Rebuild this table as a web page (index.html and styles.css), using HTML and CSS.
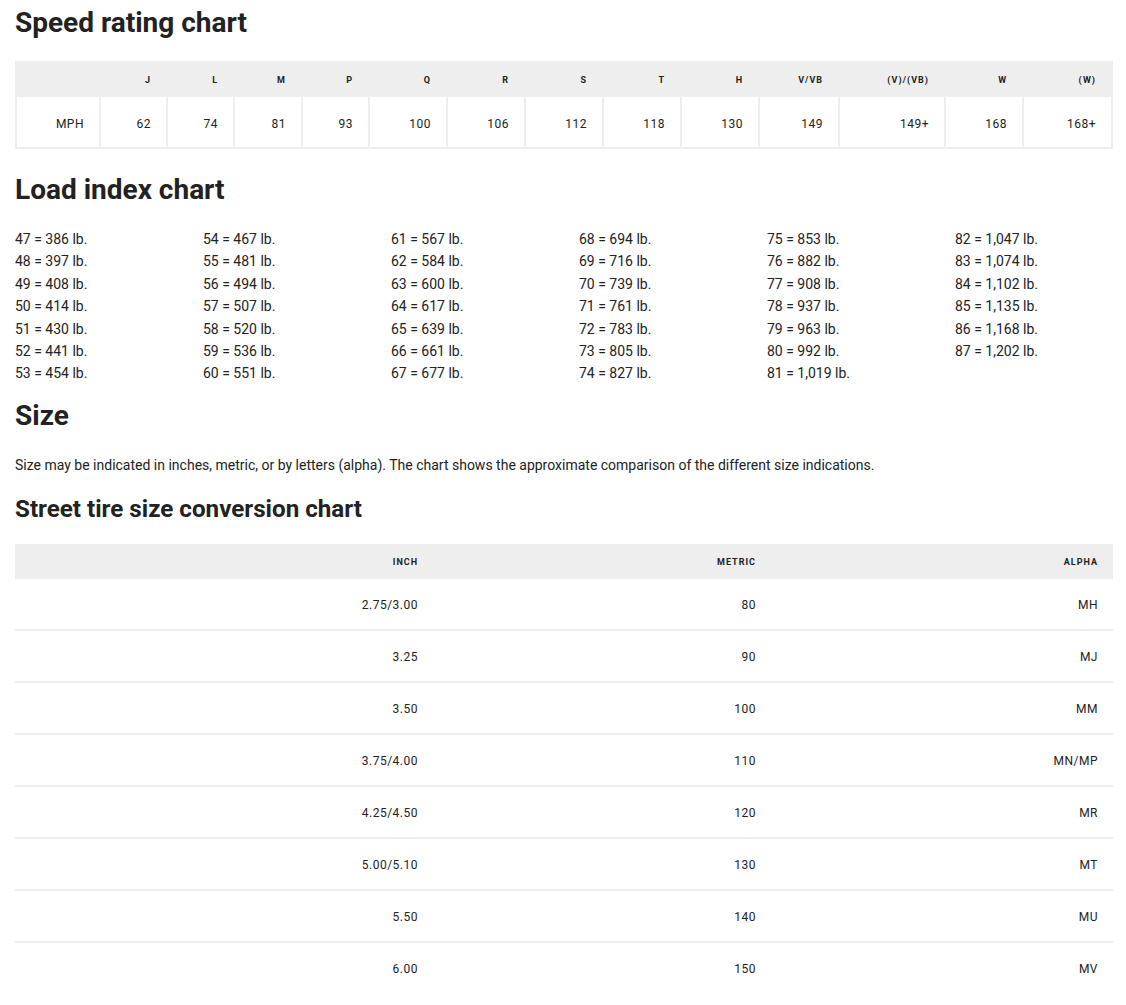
FILE: index.html
```html
<!DOCTYPE html>
<html lang="en">
<head>
<meta charset="utf-8">
<title>Tire charts</title>
<link rel="stylesheet" href="styles.css">
</head>
<body>
<main class="page">
  <h1 class="title title-first">Speed rating chart</h1>
  <table class="speed">
    <thead>
      <tr>
        <th></th><th>J</th><th>L</th><th>M</th><th>P</th><th>Q</th><th>R</th><th>S</th><th>T</th><th>H</th><th>V/VB</th><th>(V)/(VB)</th><th>W</th><th>(W)</th>
      </tr>
    </thead>
    <tbody>
      <tr>
        <td>MPH</td><td>62</td><td>74</td><td>81</td><td>93</td><td>100</td><td>106</td><td>112</td><td>118</td><td>130</td><td>149</td><td>149+</td><td>168</td><td>168+</td>
      </tr>
    </tbody>
  </table>

  <h2 class="title title-load">Load index chart</h2>
  <div class="load-grid">
    <ul class="load-col">
      <li>47 = 386 lb.</li><li>48 = 397 lb.</li><li>49 = 408 lb.</li><li>50 = 414 lb.</li><li>51 = 430 lb.</li><li>52 = 441 lb.</li><li>53 = 454 lb.</li>
    </ul>
    <ul class="load-col">
      <li>54 = 467 lb.</li><li>55 = 481 lb.</li><li>56 = 494 lb.</li><li>57 = 507 lb.</li><li>58 = 520 lb.</li><li>59 = 536 lb.</li><li>60 = 551 lb.</li>
    </ul>
    <ul class="load-col">
      <li>61 = 567 lb.</li><li>62 = 584 lb.</li><li>63 = 600 lb.</li><li>64 = 617 lb.</li><li>65 = 639 lb.</li><li>66 = 661 lb.</li><li>67 = 677 lb.</li>
    </ul>
    <ul class="load-col">
      <li>68 = 694 lb.</li><li>69 = 716 lb.</li><li>70 = 739 lb.</li><li>71 = 761 lb.</li><li>72 = 783 lb.</li><li>73 = 805 lb.</li><li>74 = 827 lb.</li>
    </ul>
    <ul class="load-col">
      <li>75 = 853 lb.</li><li>76 = 882 lb.</li><li>77 = 908 lb.</li><li>78 = 937 lb.</li><li>79 = 963 lb.</li><li>80 = 992 lb.</li><li>81 = 1,019 lb.</li>
    </ul>
    <ul class="load-col">
      <li>82 = 1,047 lb.</li><li>83 = 1,074 lb.</li><li>84 = 1,102 lb.</li><li>85 = 1,135 lb.</li><li>86 = 1,168 lb.</li><li>87 = 1,202 lb.</li>
    </ul>
  </div>

  <h2 class="title title-size">Size</h2>
  <p class="lead">Size may be indicated in inches, metric, or by letters (alpha). The chart shows the approximate comparison of the different size indications.</p>

  <h3 class="subtitle">Street tire size conversion chart</h3>
  <table class="conv">
    <thead>
      <tr><th>INCH</th><th>METRIC</th><th>ALPHA</th></tr>
    </thead>
    <tbody>
      <tr><td>2.75/3.00</td><td>80</td><td>MH</td></tr>
      <tr><td>3.25</td><td>90</td><td>MJ</td></tr>
      <tr><td>3.50</td><td>100</td><td>MM</td></tr>
      <tr><td>3.75/4.00</td><td>110</td><td>MN/MP</td></tr>
      <tr><td>4.25/4.50</td><td>120</td><td>MR</td></tr>
      <tr><td>5.00/5.10</td><td>130</td><td>MT</td></tr>
      <tr><td>5.50</td><td>140</td><td>MU</td></tr>
      <tr><td>6.00</td><td>150</td><td>MV</td></tr>
    </tbody>
  </table>
</main>
</body>
</html>
```
FILE: styles.css
```css
html, body {
  margin: 0;
  padding: 0;
  background: #fff;
}

body {
  font-family: Roboto, "Liberation Sans", sans-serif;
  color: #222;
}

.page {
  width: 1098px;
  padding: 0 13px 0 15px;
}

.title {
  font-size: 28px;
  line-height: 34px;
  font-weight: 700;
  margin: 0;
  color: #222;
}

.title-first { margin: 6px 0 21px; }
.title-load { margin: 24px 0 21px; }
.title-size { margin: 14px 0 0; }

.subtitle {
  font-size: 24.2px;
  line-height: 30px;
  font-weight: 700;
  margin: 18px 0 20px;
  color: #222;
}

.lead {
  font-size: 14px;
  line-height: 22.4px;
  margin: 21px 0 0;
}

/* Speed rating table */
.speed {
  width: 1098px;
  table-layout: fixed;
  border-collapse: separate;
  border-spacing: 2px;
  background: #eee;
}

.speed th,
.speed td {
  box-sizing: border-box;
  text-align: right;
  padding: 0 15px 0 0;
}

.speed th {
  height: 32px;
  padding-top: 2px;
  background: #eee;
  font-size: 9px;
  font-weight: 700;
  letter-spacing: 1px;
}

.speed td {
  height: 50px;
  padding-top: 3px;
  background: #fff;
  font-size: 12px;
  letter-spacing: 0.5px;
}

.speed th:nth-child(1) { width: 82px; }
.speed th:nth-child(2) { width: 65px; }
.speed th:nth-child(3) { width: 65px; }
.speed th:nth-child(4) { width: 66px; }
.speed th:nth-child(5) { width: 65px; }
.speed th:nth-child(6) { width: 76px; }
.speed th:nth-child(7) { width: 76px; }
.speed th:nth-child(8) { width: 76px; }
.speed th:nth-child(9) { width: 76px; }
.speed th:nth-child(10) { width: 76px; }
.speed th:nth-child(11) { width: 78px; }
.speed th:nth-child(12) { width: 104px; }
.speed th:nth-child(13) { width: 76px; }
.speed th:nth-child(14) { width: 87px; }

/* Load index */
.load-grid {
  display: grid;
  grid-template-columns: repeat(6, 1fr);
  column-gap: 30px;
  font-size: 14px;
  line-height: 22.4px;
}

.load-col {
  list-style: none;
  margin: 0;
  padding: 0;
}

/* Conversion table */
.conv {
  width: 1098px;
  table-layout: fixed;
  border-collapse: separate;
  border-spacing: 0;
}

.conv th,
.conv td {
  box-sizing: border-box;
  text-align: right;
  padding: 0 15px 0 0;
}

.conv th {
  height: 35px;
  padding-top: 1px;
  background: #eee;
  font-size: 9px;
  font-weight: 700;
  letter-spacing: 1px;
}

.conv td {
  height: 50px;
  padding-top: 1px;
  font-size: 12px;
  letter-spacing: 0.5px;
}

.conv tbody tr + tr td {
  height: 52px;
  border-top: 2px solid #eee;
}

.conv th:nth-child(1) { width: 418px; }
.conv th:nth-child(2) { width: 338px; }
.conv th:nth-child(3) { width: 342px; }
```
